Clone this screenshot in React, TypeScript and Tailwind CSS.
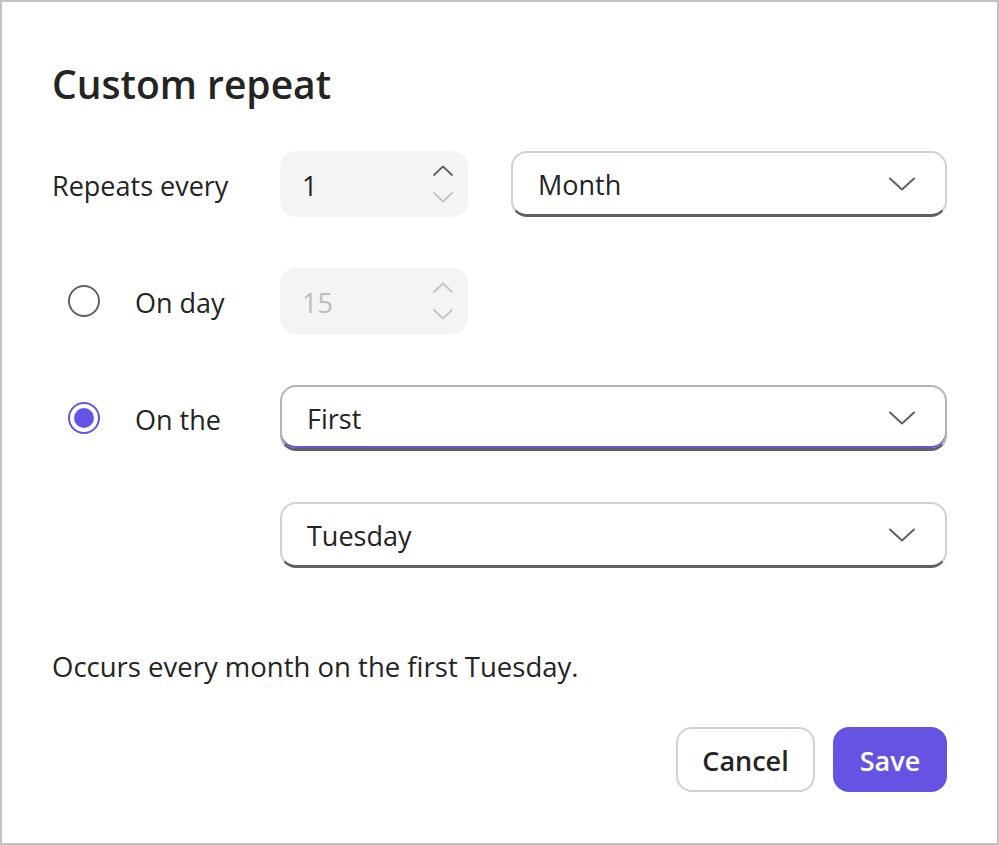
import React from "react";

const font = { fontFamily: '"Open Sans", "Noto Sans", sans-serif' };

function Chevron({ className = "" }: { className?: string }) {
  return (
    <svg width="26" height="14" viewBox="0 0 26 14" fill="none" className={className}>
      <path d="M1 1.5 L13 12.5 L25 1.5" stroke="currentColor" strokeWidth="2" strokeLinecap="round" strokeLinejoin="round" />
    </svg>
  );
}

function SpinArrow({ up, className = "" }: { up?: boolean; className?: string }) {
  return (
    <svg width="20" height="11" viewBox="0 0 20 11" fill="none" className={className}>
      <path
        d={up ? "M1 10 L10 1.5 L19 10" : "M1 1 L10 9.5 L19 1"}
        stroke="currentColor"
        strokeWidth="1.8"
        strokeLinecap="round"
        strokeLinejoin="round"
      />
    </svg>
  );
}

function SpinInput({ value, disabled }: { value: string; disabled?: boolean }) {
  return (
    <div className="flex h-[66px] w-[188px] items-center justify-between rounded-[16px] bg-[#f4f4f4] pl-[22px] pr-[15px]">
      <span className={"pt-[4px] " + (disabled ? "text-[#bdbdbd]" : "text-[#242424]")}>{value}</span>
      <div className="flex flex-col items-center gap-[16px]">
        <SpinArrow up className={disabled ? "text-[#c4c4c4]" : "text-[#616161]"} />
        <SpinArrow className="text-[#c4c4c4]" />
      </div>
    </div>
  );
}

function Dropdown({ value, focused, className = "" }: { value: string; focused?: boolean; className?: string }) {
  return (
    <div
      className={
        "flex h-[66px] items-center justify-between rounded-[16px] border-2 border-b-[3px] border-b-[#616161] pl-[25px] pr-[30px] " +
        (focused ? "border-[#b3b3b3] border-b-[#575757] shadow-[inset_0_-2px_0_#6554e3] " : "border-[#d1d1d1] ") +
        className
      }
    >
      <span className="pt-[4px] text-[#242424]">{value}</span>
      <Chevron className="text-[#616161]" />
    </div>
  );
}

function Radio({ checked }: { checked?: boolean }) {
  return (
    <div
      className={
        "flex h-[32px] w-[32px] items-center justify-center rounded-full border-2 " +
        (checked ? "border-[#6554e3]" : "border-[#616161]")
      }
    >
      {checked && <div className="h-[20px] w-[20px] rounded-full bg-[#6554e3]" />}
    </div>
  );
}

export default function App() {
  return (
    <div
      style={font}
      className="box-border flex h-[845px] w-[999px] flex-col border-2 border-[#c2c2c2] bg-white px-[50px] pt-[52px] text-[27px] text-[#242424]"
    >
      <h1 className="text-[39px] font-semibold leading-[60px] text-[#242424]">Custom repeat</h1>

      <div className="mt-[37px] grid grid-cols-[228px_1fr] gap-y-[51px]">
        <div className="flex items-center pt-[4px]">Repeats every</div>
        <div className="flex items-center gap-[43px]">
          <SpinInput value="1" />
          <Dropdown value="Month" className="flex-1" />
        </div>

        <div className="flex items-center gap-[35px] pl-[16px]">
          <Radio />
          <span className="pt-[4px]">On day</span>
        </div>
        <div className="flex items-center">
          <SpinInput value="15" disabled />
        </div>

        <div className="flex items-center gap-[35px] pl-[16px]">
          <Radio checked />
          <span className="pt-[4px]">On the</span>
        </div>
        <Dropdown value="First" focused />

        <div />
        <Dropdown value="Tuesday" />
      </div>

      <p className="mt-[79px] text-[27.5px] leading-[40px]">Occurs every month on the first Tuesday.</p>

      <div className="mt-[40px] flex justify-end gap-[18px]">
        <button className="h-[65px] w-[139px] rounded-[16px] border-2 border-[#d1d1d1] bg-white pt-[4px] font-semibold text-[#242424]">
          Cancel
        </button>
        <button className="h-[65px] w-[114px] rounded-[16px] bg-[#6554e3] pt-[4px] font-semibold text-white">Save</button>
      </div>
    </div>
  );
}
